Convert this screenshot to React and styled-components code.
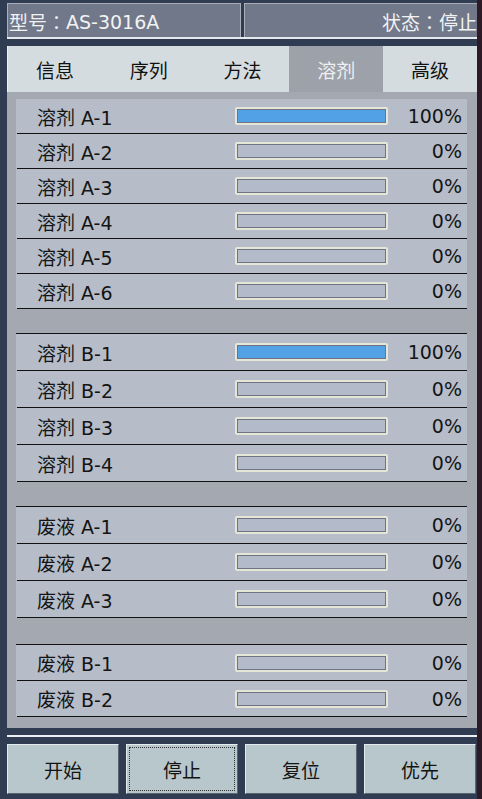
import styled, { createGlobalStyle } from "styled-components";

const GlobalStyle = createGlobalStyle`
  html, body {
    margin: 0;
    padding: 0;
    background: #2f3c51;
  }
  * {
    box-sizing: border-box;
  }
`;

const tabs = ["信息", "序列", "方法", "溶剂", "高级"];

const groups = [
  {
    rowHeight: 35,
    space: 0,
    rows: [
      { name: "溶剂 A-1", value: 100 },
      { name: "溶剂 A-2", value: 0 },
      { name: "溶剂 A-3", value: 0 },
      { name: "溶剂 A-4", value: 0 },
      { name: "溶剂 A-5", value: 0 },
      { name: "溶剂 A-6", value: 0 },
    ],
  },
  {
    rowHeight: 37,
    space: 24,
    rows: [
      { name: "溶剂 B-1", value: 100 },
      { name: "溶剂 B-2", value: 0 },
      { name: "溶剂 B-3", value: 0 },
      { name: "溶剂 B-4", value: 0 },
    ],
  },
  {
    rowHeight: 37,
    space: 24,
    rows: [
      { name: "废液 A-1", value: 0 },
      { name: "废液 A-2", value: 0 },
      { name: "废液 A-3", value: 0 },
    ],
  },
  {
    rowHeight: 36,
    space: 26,
    rows: [
      { name: "废液 B-1", value: 0 },
      { name: "废液 B-2", value: 0 },
    ],
  },
];

const actions = ["开始", "停止", "复位", "优先"];

function LevelRow({ name, value, height }) {
  return (
    <Row $height={height}>
      <Label>{name}</Label>
      <Bar>
        <Fill style={{ width: `${value}%` }} />
      </Bar>
      <Percent>{value}%</Percent>
    </Row>
  );
}

export default function App() {
  return (
    <Screen>
      <GlobalStyle />
      <Header>
        <HeaderCell>
          型号<Colon>：</Colon>AS-3016A
        </HeaderCell>
        <HeaderCell $right>
          状态<Colon>：</Colon>停止
        </HeaderCell>
      </Header>

      <TabBar>
        {tabs.map((t) => (
          <Tab key={t} $active={t === "溶剂"}>
            {t}
          </Tab>
        ))}
      </TabBar>

      <Panel>
        {groups.map((g, i) => (
          <Group key={i} $first={i === 0} $space={g.space}>
            {g.rows.map((r) => (
              <LevelRow key={r.name} name={r.name} value={r.value} height={g.rowHeight} />
            ))}
          </Group>
        ))}
      </Panel>

      <Divider />

      <ButtonRow>
        {actions.map((a) => (
          <ActionButton key={a} $focused={a === "停止"}>
            {a}
          </ActionButton>
        ))}
      </ButtonRow>
    </Screen>
  );
}

const Screen = styled.div`
  width: 482px;
  height: 799px;
  display: flex;
  flex-direction: column;
  padding: 3px 0 0 7px;
  background: #2f3c51;
  border-right: 5px solid #2c1b27;
  font-family: "DejaVu Sans", "Noto Sans CJK SC", sans-serif;
  overflow: hidden;
`;

const Header = styled.div`
  display: flex;
  gap: 3px;
  height: 36px;
  border-bottom: 2px solid #e6e9ee;
`;

const HeaderCell = styled.div`
  flex: 1;
  display: flex;
  align-items: center;
  justify-content: ${(p) => (p.$right ? "flex-end" : "flex-start")};
  padding: 2px 0 0 1px;
  background: #71788a;
  border: 1px solid #a9aeb9;
  border-bottom: none;
  border-right: ${(p) => (p.$right ? "none" : "1px solid #a9aeb9")};
  color: #f2f2f2;
  font-size: 19px;
  white-space: nowrap;
  overflow: hidden;
`;

const Colon = styled.span`
  font-family: "Noto Sans CJK TC", "Noto Sans CJK SC", sans-serif;
`;

const TabBar = styled.div`
  display: flex;
  height: 46px;
  margin-top: 7px;
  background: #d5dce0;
  border-left: 1px solid #eef1f3;
`;

const Tab = styled.div`
  flex: 1;
  display: flex;
  align-items: center;
  justify-content: center;
  font-size: 19px;
  color: ${(p) => (p.$active ? "#eef0f3" : "#111")};
  background: ${(p) => (p.$active ? "#9da1a9" : "transparent")};
`;

const Panel = styled.div`
  height: 636px;
  display: flex;
  flex-direction: column;
  padding: 7px 10px 0 9px;
  background: #a4a8b0;
`;

const Group = styled.div`
  display: flex;
  flex-direction: column;
  margin-top: ${(p) => p.$space}px;
  background: #b6bdc9;
  border-top: ${(p) => (p.$first ? "none" : "1px solid #111")};
`;

const Row = styled.div`
  height: ${(p) => p.$height}px;
  display: flex;
  align-items: center;
  padding: 0 5px 0 20px;
  border-bottom: 1px solid #111;
  margin-left: 1px;
`;

const Label = styled.span`
  width: 198px;
  font-size: 19px;
  color: #141414;
  white-space: nowrap;
`;

const Bar = styled.div`
  width: 153px;
  height: 18px;
  padding: 1px;
  border: 2px solid #e4e7d6;
  border-radius: 2px;
  background: #b3bbca;
  box-shadow: inset 0 0 0 1px #6f7385;
`;

const Fill = styled.div`
  height: 100%;
  background: #52a0e6;
`;

const Percent = styled.span`
  flex: 1;
  text-align: right;
  font-size: 19px;
  color: #141414;
`;

const Divider = styled.div`
  height: 2px;
  margin-top: 7px;
  background: #eef0f3;
`;

const ButtonRow = styled.div`
  display: flex;
  gap: 7px;
  margin-top: 7px;
  padding-right: 1px;
`;

const ActionButton = styled.button`
  flex: 1;
  height: 50px;
  display: flex;
  align-items: center;
  justify-content: center;
  background: #b8c7cb;
  border: 1px solid;
  border-color: #e4ebed #5c6670 #5c6670 #e4ebed;
  font-family: "DejaVu Sans", "Noto Sans CJK SC", sans-serif;
  font-size: 19px;
  color: #141414;
  outline: ${(p) => (p.$focused ? "1px dotted #333" : "none")};
  outline-offset: -4px;
`;
